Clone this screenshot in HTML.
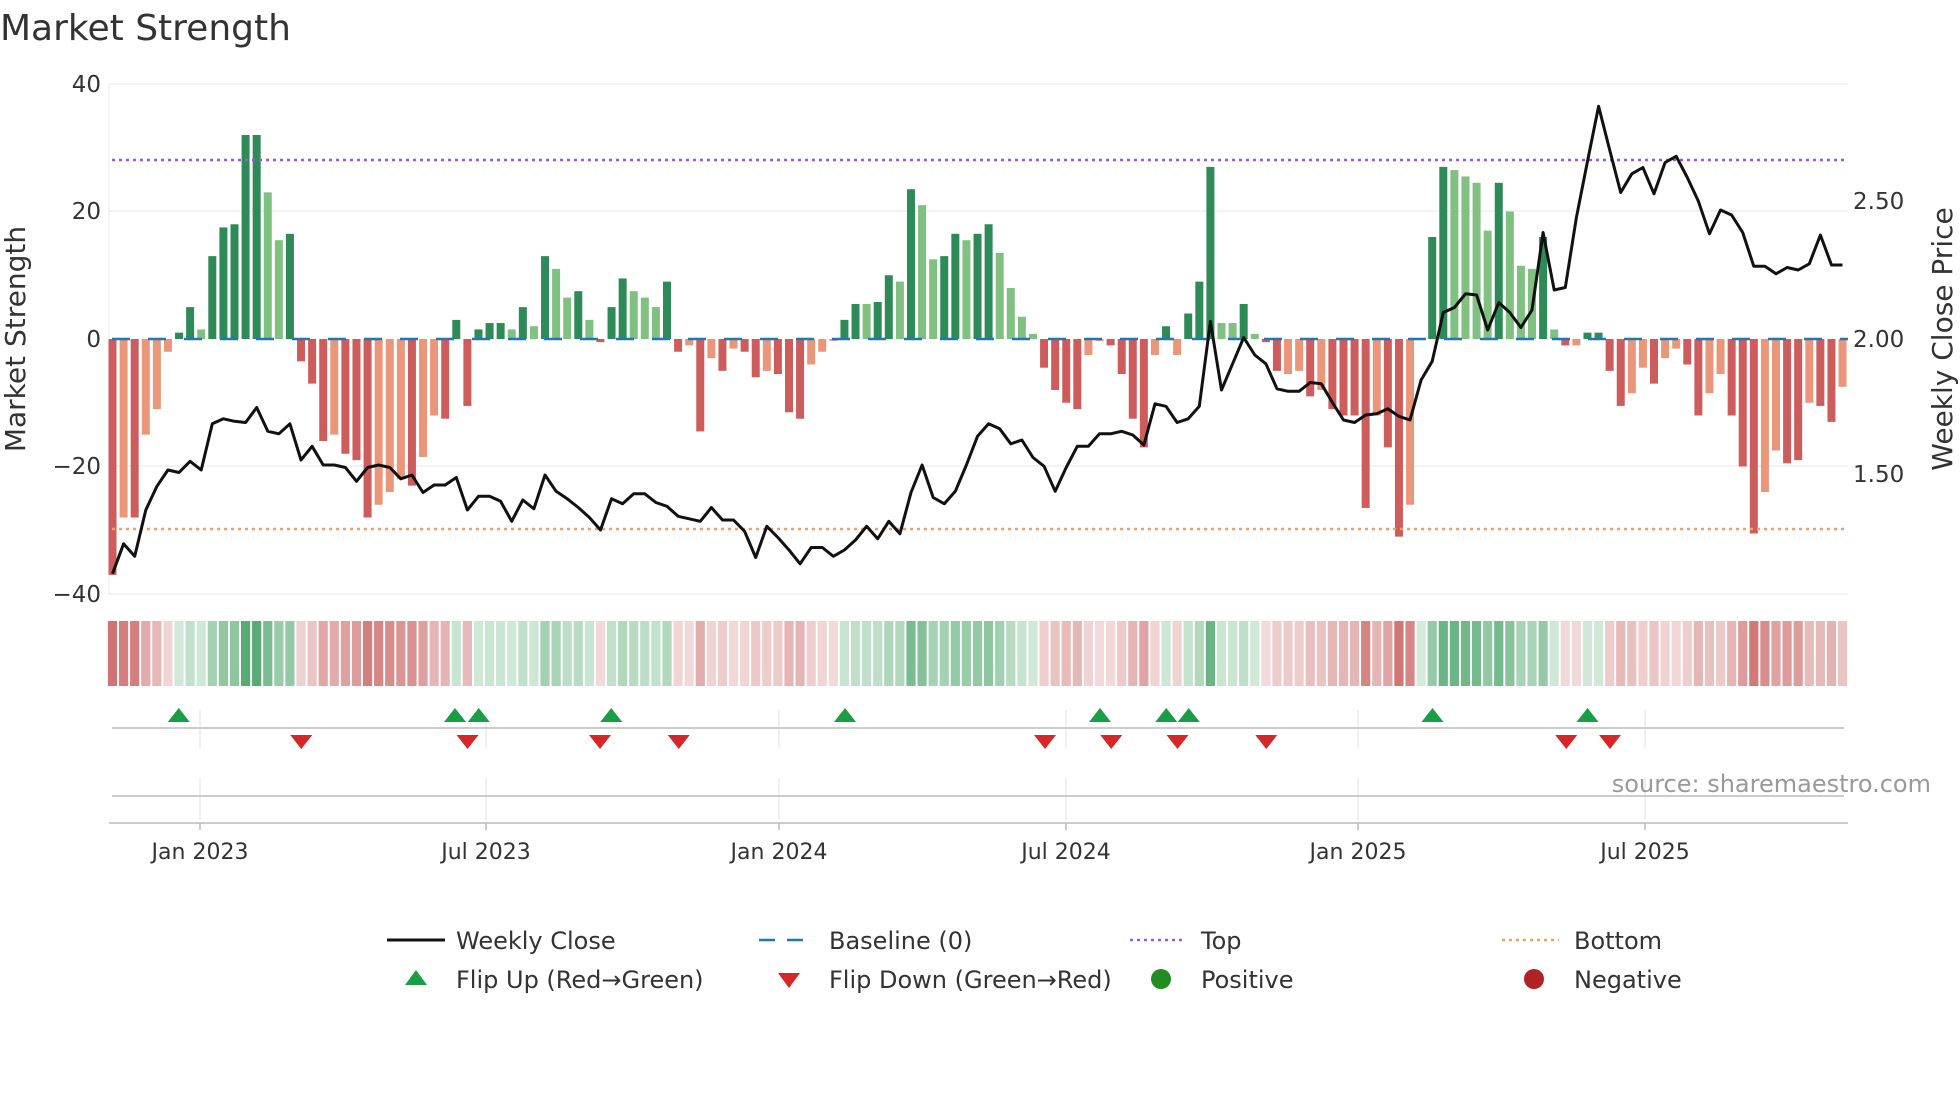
<!DOCTYPE html>
<html><head><meta charset="utf-8"><style>
html,body{margin:0;padding:0;background:#fff;}
svg{display:block;font-family:"DejaVu Sans","Liberation Sans",sans-serif;}
</style></head><body>
<svg id="s" width="1960" height="1102" viewBox="0 0 1960 1102" xmlns="http://www.w3.org/2000/svg">
<rect width="1960" height="1102" fill="#fff"/>
<text x="0" y="40" font-size="36" fill="#333">Market Strength</text>
<g id="grid" stroke="#ececec" stroke-width="1.2">
<line x1="109" x2="1848" y1="84" y2="84"/>
<line x1="109" x2="1848" y1="211" y2="211"/>
<line x1="109" x2="1848" y1="466" y2="466"/>
<line x1="109" x2="1848" y1="594" y2="594"/>
<line x1="109" x2="109" y1="84" y2="594"/>
</g>
<g font-size="23" fill="#333" text-anchor="end">
<text x="101" y="92">40</text>
<text x="101" y="219">20</text>
<text x="101" y="347">0</text>
<text x="101" y="474">−20</text>
<text x="101" y="602">−40</text>
</g>
<g font-size="23" fill="#333">
<text x="1853" y="209">2.50</text>
<text x="1853" y="347">2.00</text>
<text x="1853" y="482">1.50</text>
</g>
<text transform="translate(25,339) rotate(-90)" font-size="28" fill="#333" text-anchor="middle">Market Strength</text>
<text transform="translate(1952,339) rotate(-90)" font-size="28" fill="#333" text-anchor="middle">Weekly Close Price</text>
<g id="bars"></g>
<line x1="112" x2="1848" y1="339" y2="339" stroke="#1f77b4" stroke-width="2.5" stroke-dasharray="18,18"/>
<line x1="112" x2="1848" y1="160" y2="160" stroke="#9b59d6" stroke-width="2.5" stroke-dasharray="3,4"/>
<line x1="112" x2="1848" y1="529" y2="529" stroke="#f0a060" stroke-width="2.5" stroke-dasharray="3,4"/>
<polyline id="price" fill="none" stroke="#111" stroke-width="3" stroke-linejoin="round"/>
<g id="heat"></g>
<g stroke="#e6e6e6" stroke-width="1.2">
<line x1="200" x2="200" y1="710" y2="748"/><line x1="486" x2="486" y1="710" y2="748"/><line x1="779" x2="779" y1="710" y2="748"/><line x1="1066" x2="1066" y1="710" y2="748"/><line x1="1358" x2="1358" y1="710" y2="748"/><line x1="1645" x2="1645" y1="710" y2="748"/>
<line x1="200" x2="200" y1="778" y2="820"/><line x1="486" x2="486" y1="778" y2="820"/><line x1="779" x2="779" y1="778" y2="820"/><line x1="1066" x2="1066" y1="778" y2="820"/><line x1="1358" x2="1358" y1="778" y2="820"/><line x1="1645" x2="1645" y1="778" y2="820"/>
</g>
<line x1="112" x2="1844" y1="728" y2="728" stroke="#ccc" stroke-width="2"/>
<line x1="112" x2="1844" y1="796" y2="796" stroke="#ccc" stroke-width="2"/>
<line x1="109" x2="1848" y1="823" y2="823" stroke="#ccc" stroke-width="2"/>
<g stroke="#bbb" stroke-width="1.5">
<line x1="200" x2="200" y1="823" y2="830"/><line x1="486" x2="486" y1="823" y2="830"/><line x1="779" x2="779" y1="823" y2="830"/><line x1="1066" x2="1066" y1="823" y2="830"/><line x1="1358" x2="1358" y1="823" y2="830"/><line x1="1645" x2="1645" y1="823" y2="830"/>
</g>
<g id="flips"></g>
<text x="1931" y="792" font-size="24" fill="#999" text-anchor="end">source: sharemaestro.com</text>
<g font-size="22" fill="#333" text-anchor="middle">
<text x="200" y="859">Jan 2023</text>
<text x="486" y="859">Jul 2023</text>
<text x="779" y="859">Jan 2024</text>
<text x="1066" y="859">Jul 2024</text>
<text x="1358" y="859">Jan 2025</text>
<text x="1645" y="859">Jul 2025</text>
</g>
<g font-size="24" fill="#333">
<line x1="387" x2="445" y1="940" y2="940" stroke="#111" stroke-width="3"/>
<text x="456" y="949">Weekly Close</text>
<line x1="759" x2="814" y1="940" y2="940" stroke="#1f77b4" stroke-width="2.5" stroke-dasharray="16,12"/>
<text x="829" y="949">Baseline (0)</text>
<line x1="1130" x2="1186" y1="940" y2="940" stroke="#9b59d6" stroke-width="2.5" stroke-dasharray="3,4"/>
<text x="1201" y="949">Top</text>
<line x1="1502" x2="1559" y1="940" y2="940" stroke="#f0a060" stroke-width="2.5" stroke-dasharray="3,4"/>
<text x="1574" y="949">Bottom</text>
<polygon points="405,985 427,985 416,970" fill="#1a9e45"/>
<text x="456" y="988">Flip Up (Red→Green)</text>
<polygon points="778,973 800,973 789,988" fill="#d62728"/>
<text x="829" y="988">Flip Down (Green→Red)</text>
<circle cx="1161" cy="979" r="10" fill="#228b22"/>
<text x="1201" y="988">Positive</text>
<circle cx="1534" cy="979" r="10" fill="#b22222"/>
<text x="1574" y="988">Negative</text>
</g>
</svg>
<script>
var V=[-37,-28,-28,-15,-11,-2,1,5,1.5,13,17.5,18,32,32,23,15.5,16.5,-3.5,-7,-16,-15,-18,-19,-28,-26,-24,-22,-23,-18.5,-12,-12.5,3,-10.5,1.5,2.5,2.5,1.5,5,2,13,11,6.5,7.5,3,-0.5,5,9.5,7.5,6.5,5,9,-2,-1,-14.5,-3,-5,-1.5,-2,-6,-5,-5.5,-11.5,-12.5,-4,-2,-0.3,3,5.5,5.5,5.8,10,9,23.5,21,12.5,13,16.5,15.5,16.5,18,13.5,8,3.5,0.8,-4.5,-8,-10,-11,-2.5,-0.3,-1,-5.5,-12.5,-17,-2.5,2,-2.5,4,9,27,2.5,2.5,5.5,0.8,-0.5,-5,-5.5,-5,-9,-8,-11,-12,-12,-26.5,-12,-17,-31,-26,0,16,27,26.5,25.5,24.5,17,24.5,20,11.5,11,16,1.5,-1,-1,1,1,-5,-10.5,-8.5,-4.5,-7,-3,-1.5,-4,-12,-8.5,-5.5,-12,-20,-30.5,-24,-17.5,-19.5,-19,-10,-10.5,-13,-7.5];
var D=[1,0,1,0,0,0,1,1,0,1,1,1,1,1,0,0,1,1,1,1,0,1,1,1,0,0,0,1,0,0,1,1,1,1,1,1,0,1,0,1,0,0,1,0,1,1,1,0,0,0,1,1,0,1,0,1,0,1,1,0,1,1,1,0,0,0,1,1,0,1,1,0,1,0,0,1,1,0,1,1,0,0,0,0,1,1,1,1,0,0,1,1,1,1,0,1,0,1,1,1,0,0,1,0,1,1,0,0,1,0,1,1,1,1,0,1,1,0,0,1,1,0,0,0,0,1,0,0,0,1,0,1,0,1,1,1,1,0,0,1,0,0,1,1,0,0,1,1,1,0,0,1,1,0,1,1,0];
var P=[459,435,445,408,389,376,378,369,376,339,335,337,338,326,345,347,339,368,357,372,372,374,385,374,372,374,383,380,394,388,388,382,408,397,397,401,417,400,407,380,393,399,406,414,424,399,403,395,395,402,405,413,415,417,406,416,416,425,446,421,430,440,451,438,438,445,440,432,421,431,417,427,394,372,398,403,393,372,349,339,343,355,352,366,373,393,374,357,357,347,347,345,348,356,323,325,338,335,325,257,312,291,270,284,291,311,313,313,306,307,322,336,338,332,331,327,333,336,304,289,250,246,235,236,264,242,250,262,248,186,232,230,174,129,85,120,154,139,134,155,130,125,142,161,187,168,172,186,213,213,219,214,216,211,188,212,212];
var NS="http://www.w3.org/2000/svg";
function el(t,a,p){var e=document.createElementNS(NS,t);for(var k in a)e.setAttribute(k,a[k]);p.appendChild(e);return e;}
var bars=document.getElementById('bars'),heat=document.getElementById('heat'),fl=document.getElementById('flips');
var dx=11.09,x0=112.5,u=6.375;
var pts=[];
for(var i=0;i<V.length;i++){
 var v=V[i],x=x0+i*dx;
 var c=v>=0?(D[i]?'#2e8b57':'#80c080'):(D[i]?'#cd5c5c':'#e9967a');
 var y=v>=0?339-v*u:339,h=Math.max(Math.abs(v)*u,0.5);
 el('rect',{x:x-4,y:y,width:8,height:h,fill:c},bars);
 var a=Math.min(Math.abs(v)/32,1);
 var col=v>=0?'rgba(46,150,80,'+(0.2+0.6*a).toFixed(2)+')':'rgba(195,80,80,'+(0.2+0.6*a).toFixed(2)+')';
 el('rect',{x:x-4.6,y:621,width:9.2,height:65,fill:col},heat);
 pts.push(x.toFixed(1)+','+(P[i]*1.25).toFixed(1));
}
document.getElementById('price').setAttribute('points',pts.join(' '));
var up=[143,364,383,489,676,880,933,951,1146,1270],dn=[241,374,480,543,836,889,942,1013,1253,1288];
up.forEach(function(d){var x=d*1.25;el('polygon',{points:(x-11)+',722 '+(x+11)+',722 '+x+',708',fill:'#1a9e45'},fl);});
dn.forEach(function(d){var x=d*1.25;el('polygon',{points:(x-11)+',735 '+(x+11)+',735 '+x+',749',fill:'#d62728'},fl);});
</script>
</body></html>
